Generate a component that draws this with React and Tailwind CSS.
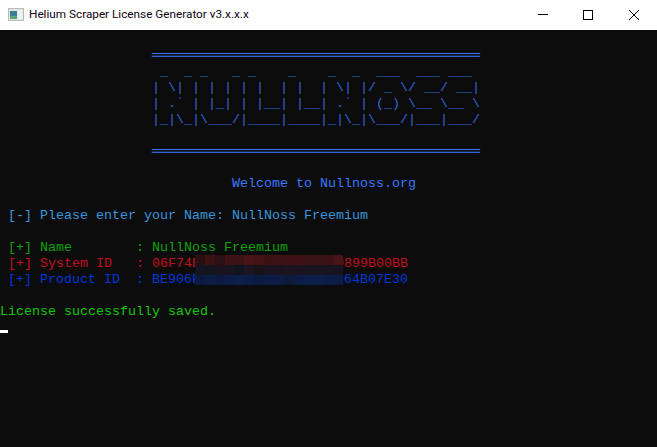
const banner = '═'.repeat(41)

const art = [
  ' _  _ _   _ _    _    _  _  ___  ___ ___ ',
  '| \\| | | | | |  | |  | \\| |/ _ \\/ __/ __|',
  '| .` | |_| | |__| |__| .` | (_) \\__ \\__ \\',
  '|_|\\_|\\___/|____|____|_|\\_|\\___/|___|___/',
]

// mosaic that hides the middle of the two ids, one row of cells per 10px
const mosaic = [
  'bg-[#2a0f12]', 'bg-[#3a1215]', 'bg-[#2a1012]', 'bg-[#3e1215]', 'bg-[#3a1214]',
  'bg-[#4a1316]', 'bg-[#451316]', 'bg-[#3a1013]', 'bg-[#3a1114]', 'bg-[#3d1114]',
  'bg-[#3e1215]', 'bg-[#3a1114]', 'bg-[#3a1114]', 'bg-[#3a1114]', 'bg-[#4a1316]',
  'bg-[#151420]', 'bg-[#14141f]', 'bg-[#1a1320]', 'bg-[#171420]', 'bg-[#0f1420]',
  'bg-[#1c1420]', 'bg-[#151318]', 'bg-[#1a1420]', 'bg-[#1a1420]', 'bg-[#1c1420]',
  'bg-[#1a1420]', 'bg-[#1a1420]', 'bg-[#1a1420]', 'bg-[#1a1420]', 'bg-[#171420]',
  'bg-[#0c1a42]', 'bg-[#0c1c46]', 'bg-[#0c1a42]', 'bg-[#0c1c46]', 'bg-[#0c1e4a]',
  'bg-[#0c1c46]', 'bg-[#0c1a42]', 'bg-[#0c1c46]', 'bg-[#0c1c46]', 'bg-[#0e1a38]',
  'bg-[#0c1c46]', 'bg-[#0c1e4a]', 'bg-[#0c1e4a]', 'bg-[#0c1c46]', 'bg-[#0c1c46]',
]

function Row({ className, children }) {
  return <div className={`h-4 whitespace-pre ${className ?? ''}`}>{children}</div>
}

export default function App() {
  return (
    <div className="flex h-[447px] w-[657px] flex-col overflow-hidden bg-[#0c0c0c]">
      <div className="flex h-[30px] shrink-0 items-center bg-white pl-2">
        <svg width="16" height="16" viewBox="0 0 16 16" className="mr-[5px]">
          <rect x="0.5" y="1.5" width="15" height="12" fill="#dfe6e6" stroke="#b8bcbc" />
          <rect x="2" y="4" width="7" height="8" fill="#3f7f8f" />
          <rect x="2" y="9" width="7" height="3" fill="#5fa07a" />
          <rect x="10" y="3" width="4" height="9" fill="#eef3f3" />
        </svg>
        <span className="font-['Roboto',sans-serif] text-[11.75px] text-[#100010]">
          Helium Scraper License Generator v3.x.x.x
        </span>
        <div className="ml-auto flex h-full text-black">
          <div className="grid h-full w-[45px] place-items-center">
            <svg width="10" height="10" viewBox="0 0 10 10"><path d="M0 4.5h10" stroke="currentColor" fill="none" /></svg>
          </div>
          <div className="grid h-full w-[46px] place-items-center">
            <svg width="10" height="10" viewBox="0 0 10 10"><rect x="0.5" y="0.5" width="9" height="9" stroke="currentColor" fill="none" /></svg>
          </div>
          <div className="grid h-full w-[46px] place-items-center">
            <svg width="10" height="10" viewBox="0 0 10 10"><path d="M0 0l10 10M10 0L0 10" stroke="currentColor" fill="none" /></svg>
          </div>
        </div>
      </div>

      <div className="relative flex-1 pt-[2px] font-['Liberation_Mono',monospace] text-[13.33px] leading-4">
        <Row />
        <Row className="pl-[152px] text-[#3b78ff]">{banner}</Row>
        {art.map((line) => (
          <Row key={line} className="pl-[152px] text-[#3068d8]">{line}</Row>
        ))}
        <Row />
        <Row className="pl-[152px] text-[#3b78ff]">{banner}</Row>
        <Row />
        <Row className="pl-[232px] text-[#3b78ff]">Welcome to Nullnoss.org</Row>
        <Row />
        <Row className="pl-2 text-[#3a96dd]">[-] Please enter your Name: NullNoss Freemium</Row>
        <Row />
        <Row className="pl-2 text-[#13a10e]">[+] Name        : NullNoss Freemium</Row>
        <Row className="pl-2 text-[#c50f1f]">[+] System ID   : 06F74E000000000000000000899B00BB</Row>
        <Row className="pl-2 text-[#0037da]">[+] Product ID  : BE906F00000000000000000064B07E30</Row>
        <Row />
        <Row className="text-[#16c60c]">License successfully saved.</Row>
        <Row className="relative">
          <div className="absolute bottom-[3px] left-0 h-[3px] w-2 bg-white" />
        </Row>

        <div className="absolute left-[195px] top-[225px] grid h-[30px] w-[148px] grid-cols-[repeat(15,1fr)] grid-rows-3">
          {mosaic.map((cell, i) => (
            <div key={i} className={cell} />
          ))}
        </div>
      </div>
    </div>
  )
}
